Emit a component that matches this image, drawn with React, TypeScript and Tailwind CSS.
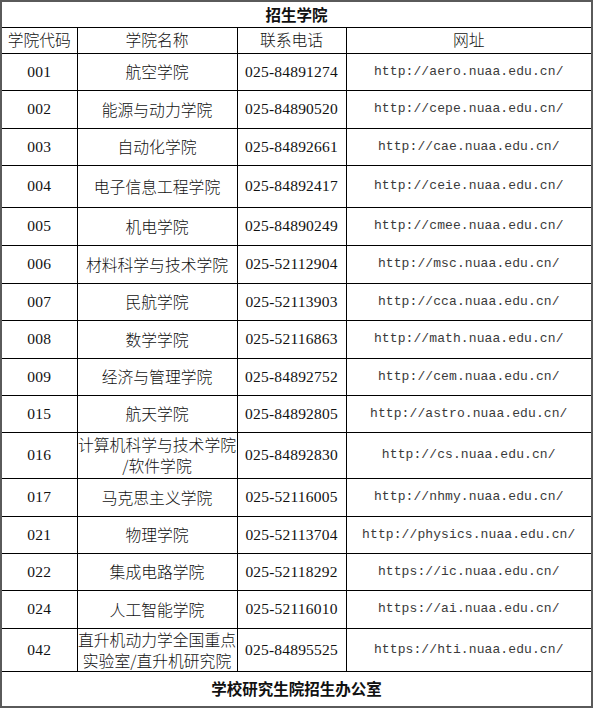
const colleges = [
  { code: "001", name: ["航空学院"], phone: "025-84891274", url: "http://aero.nuaa.edu.cn/", h: "h-[37px]" },
  { code: "002", name: ["能源与动力学院"], phone: "025-84890520", url: "http://cepe.nuaa.edu.cn/", h: "h-[38px]" },
  { code: "003", name: ["自动化学院"], phone: "025-84892661", url: "http://cae.nuaa.edu.cn/", h: "h-[37px]" },
  { code: "004", name: ["电子信息工程学院"], phone: "025-84892417", url: "http://ceie.nuaa.edu.cn/", h: "h-[42px]" },
  { code: "005", name: ["机电学院"], phone: "025-84890249", url: "http://cmee.nuaa.edu.cn/", h: "h-[38px]" },
  { code: "006", name: ["材料科学与技术学院"], phone: "025-52112904", url: "http://msc.nuaa.edu.cn/", h: "h-[38px]" },
  { code: "007", name: ["民航学院"], phone: "025-52113903", url: "http://cca.nuaa.edu.cn/", h: "h-[37px]" },
  { code: "008", name: ["数学学院"], phone: "025-52116863", url: "http://math.nuaa.edu.cn/", h: "h-[38px]" },
  { code: "009", name: ["经济与管理学院"], phone: "025-84892752", url: "http://cem.nuaa.edu.cn/", h: "h-[37px]" },
  { code: "015", name: ["航天学院"], phone: "025-84892805", url: "http://astro.nuaa.edu.cn/", h: "h-[37px]" },
  { code: "016", name: ["计算机科学与技术学院", "/软件学院"], phone: "025-84892830", url: "http://cs.nuaa.edu.cn/", h: "h-[46px]" },
  { code: "017", name: ["马克思主义学院"], phone: "025-52116005", url: "http://nhmy.nuaa.edu.cn/", h: "h-[38px]" },
  { code: "021", name: ["物理学院"], phone: "025-52113704", url: "http://physics.nuaa.edu.cn/", h: "h-[37px]" },
  { code: "022", name: ["集成电路学院"], phone: "025-52118292", url: "https://ic.nuaa.edu.cn/", h: "h-[37px]" },
  { code: "024", name: ["人工智能学院"], phone: "025-52116010", url: "https://ai.nuaa.edu.cn/", h: "h-[38px]" },
  { code: "042", name: ["直升机动力学全国重点", "实验室/直升机研究院"], phone: "025-84895525", url: "https://hti.nuaa.edu.cn/", h: "h-[43px]" },
];

const cjk = "font-['Noto_Sans_CJK_SC',sans-serif]";
const num = "font-['Liberation_Serif','Noto_Sans_CJK_SC',serif]";
const mono = "font-['Liberation_Mono',monospace]";

export default function App() {
  return (
    <div className="min-h-[721px] bg-white">
      <table className="w-[591px] table-fixed border-collapse border-2 border-[#5a5a5a] text-[#111]">
        <colgroup>
          <col className="w-[76px]" />
          <col className="w-[160px]" />
          <col className="w-[109px]" />
          <col className="w-[246px]" />
        </colgroup>
        <tbody>
          <tr className="h-[26px]">
            <td colSpan={4} className={`border border-black p-0 text-center text-[15.5px] leading-none font-bold ${cjk}`}>
              招生学院
            </td>
          </tr>
          <tr className={`h-[26px] text-center text-[15.8px] leading-none font-light ${cjk}`}>
            <td className="border border-black p-0">学院代码</td>
            <td className="border border-black p-0">学院名称</td>
            <td className="border border-black p-0">联系电话</td>
            <td className="border border-black p-0">网址</td>
          </tr>
          {colleges.map((c) => (
            <tr key={c.code} className={`${c.h} text-center`}>
              <td className={`border border-black p-0 text-[15.5px] tracking-[0.2px] ${num}`}>{c.code}</td>
              <td className={`border border-black p-0 text-[15.8px] leading-[21px] font-light ${cjk}`}>
                {c.name.map((line) => (
                  <div key={line}>{line}</div>
                ))}
              </td>
              <td className={`border border-black p-0 text-[15.5px] tracking-[0.2px] ${num}`}>{c.phone}</td>
              <td className={`border border-black p-0 text-[13px] tracking-[0.1px] text-[#3a3a3a] ${mono}`}>{c.url}</td>
            </tr>
          ))}
          <tr className="h-[36px]">
            <td colSpan={4} className={`border border-black p-0 text-center text-[15.5px] leading-none font-bold ${cjk}`}>
              学校研究生院招生办公室
            </td>
          </tr>
        </tbody>
      </table>
    </div>
  );
}
